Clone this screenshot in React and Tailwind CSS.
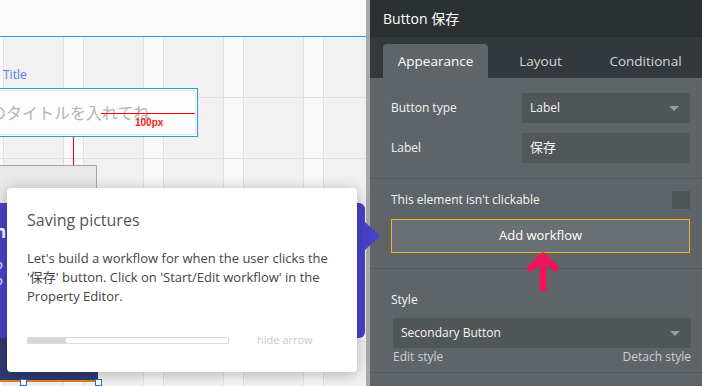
import React from 'react';

const Caret = () => (
  <span className="w-0 h-0 border-l-[5px] border-r-[5px] border-t-[5px] border-l-transparent border-r-transparent border-t-[#979ca0]" />
);

function Canvas() {
  return (
    <div className="relative w-[366px] shrink-0 flex flex-col">
      <div className="h-[37px] bg-[#fafafa] border-b border-[#2b9bd1]" />
      <div className="relative flex-1 bg-[repeating-linear-gradient(90deg,#f9f9f9_0px,#f9f9f9_3px,#e0e0e0_3px,#e0e0e0_4px,#f1f1f1_4px,#f1f1f1_63px,#e0e0e0_63px,#e0e0e0_64px,#f9f9f9_64px,#f9f9f9_80px)]">
        <div className="absolute inset-0 bg-[repeating-linear-gradient(180deg,transparent_0px,transparent_60px,#e0e0e0_60px,#e0e0e0_61px)]" />
      </div>

      {/* canvas elements */}
      <span className="absolute left-[3px] top-[66px] text-[12px] text-[#4a7fe4]">Title</span>
      <div className="absolute left-[-4px] top-[88px] w-[202px] h-[49px] border border-[#2a9bd0] bg-[#fdfdfd] overflow-hidden">
        <div className="absolute inset-[1px] border border-[#e4e4e4] rounded-[3px]" />
        <span className="absolute left-[-7px] top-[12px] text-[16px] text-[#b4b4b4] whitespace-nowrap">のタイトルを入れてね</span>
        <div className="absolute left-[104px] top-[24px] w-[94px] h-[1px] bg-[#ff0000]" />
        <span className="absolute left-[138px] top-[26px] text-[10px] font-bold text-[#ff1a1a] font-['Liberation_Sans',sans-serif]">100px</span>
      </div>
      <div className="absolute left-[73px] top-[137px] w-[1px] h-[60px] bg-[#ff0000]" />
      <div className="absolute left-[-1px] top-[165px] w-[98px] h-[60px] border border-[#a6a6a6] bg-[#e9e9e9]" />
      <div className="absolute left-0 top-[300px] w-[98px] h-[82px] bg-[#2f3b72] border-b-2 border-[#e07f1f]" />
      <div className="absolute left-0 top-[203px] w-[365px] h-[135px] bg-[#4642c9] rounded-r-[6px] overflow-hidden">
        <span className="absolute left-[-5px] top-[16px] text-[17px] font-bold text-white">n</span>
        <span className="absolute left-[-5px] top-[52px] text-[13px] text-white">o</span>
        <span className="absolute left-[-5px] top-[68px] text-[13px] text-white">o</span>
      </div>
      <div className="absolute left-[20px] top-[379px] w-[7px] h-[7px] bg-white border border-[#2c6fd6]" />
      <div className="absolute left-[95px] top-[379px] w-[7px] h-[7px] bg-white border border-[#2c6fd6]" />
    </div>
  );
}

function Panel() {
  return (
    <div className="w-[332px] shrink-0 flex flex-col bg-[#5f6468] text-[#f4f4f4] text-[12px]">
      <div className="h-[37px] bg-[#2b3033] px-[13px] flex items-center text-[14px] text-white">Button 保存</div>
      <div className="h-[41px] bg-[#33383c] pl-[13px] flex items-end">
        <div className="w-[105px] h-[34px] bg-[#5f6468] rounded-t-[4px] flex items-center justify-center text-white text-[13.5px]">Appearance</div>
        <div className="w-[105px] h-[34px] flex items-center justify-center text-[#d2d4d6] text-[13.5px]">Layout</div>
        <div className="w-[105px] h-[34px] flex items-center justify-center text-[#d2d4d6] text-[13.5px]">Conditional</div>
      </div>

      <div className="pl-[21px] pr-[12px] pt-[15px] pb-[15px] border-b border-[#54595c] flex flex-col gap-[10px]">
        <div className="flex items-center h-[30px]">
          <span className="w-[131px]">Button type</span>
          <div className="flex-1 h-full bg-[#505558] pl-[8px] pr-[11px] flex items-center justify-between">
            <span>Label</span>
            <Caret />
          </div>
        </div>
        <div className="flex items-center h-[30px]">
          <span className="w-[131px]">Label</span>
          <div className="flex-1 h-full bg-[#525759] pl-[8px] flex items-center text-[13px]">保存</div>
        </div>
      </div>

      <div className="pl-[21px] pr-[12px] pt-[12px] pb-[15px] border-b border-[#54595c] flex flex-col gap-[10px]">
        <div className="flex items-center justify-between h-[18px]">
          <span>This element isn't clickable</span>
          <span className="w-[18px] h-[18px] bg-[#4f5457]" />
        </div>
        <div className="h-[34px] border border-[#f0b22c] bg-[#6a6f73] flex items-center justify-center text-white text-[13px]">Add workflow</div>
      </div>

      <div className="pl-[21px] pr-[11px] pt-[22px] pb-[6px] border-b border-[#54595c] flex flex-col">
        <span className="leading-[18px]">Style</span>
        <div className="mt-[9px] ml-[2px] h-[30px] bg-[#515659] pl-[8px] pr-[11px] flex items-center justify-between">
          <span>Secondary Button</span>
          <Caret />
        </div>
        <div className="ml-[2px] h-[18px] flex items-center justify-between text-[#cdd0d2]">
          <span>Edit style</span>
          <span>Detach style</span>
        </div>
      </div>
    </div>
  );
}

export default function App() {
  return (
    <div className="relative flex w-[702px] h-[386px] overflow-hidden font-['Open_Sans','Noto_Sans_CJK_JP',sans-serif]">
      <Canvas />
      <div className="w-[4px] shrink-0 bg-[#a9a9a9]" />
      <Panel />

      {/* callout arrow toward the button */}
      <div className="absolute left-[365px] top-[222px] w-0 h-0 border-t-[14px] border-b-[14px] border-l-[15px] border-t-transparent border-b-transparent border-l-[#4642c9]" />

      {/* tutorial card */}
      <div className="absolute left-[7px] top-[188px] w-[350px] h-[184px] bg-white rounded-[4px] shadow-[0_2px_14px_rgba(0,0,0,0.28)] px-[20px] pt-[20px]">
        <div className="text-[16px] text-[#555] leading-[24px]">Saving pictures</div>
        <p className="mt-[17px] w-[312px] text-[13px] leading-[19px] text-[#444]">
          Let's build a workflow for when the user clicks the '保存' button. Click on 'Start/Edit workflow' in the Property Editor.
        </p>
        <div className="mt-[26px] flex items-center">
          <div className="w-[202px] h-[7px] border border-[#dcdcdc] flex">
            <div className="w-[38px] h-full bg-[#d6d6d6]" />
          </div>
          <span className="ml-[28px] text-[11px] text-[#c4c8cb]">hide arrow</span>
        </div>
      </div>

      {/* pink pointer arrow */}
      <svg className="absolute left-[526px] top-[249px]" width="34" height="46" viewBox="0 0 34 46" fill="none">
        <path d="M17 8 V39 M5 19 L17 7 L29 19" stroke="#f2145b" strokeWidth="7" strokeLinecap="round" strokeLinejoin="round" />
      </svg>
    </div>
  );
}
